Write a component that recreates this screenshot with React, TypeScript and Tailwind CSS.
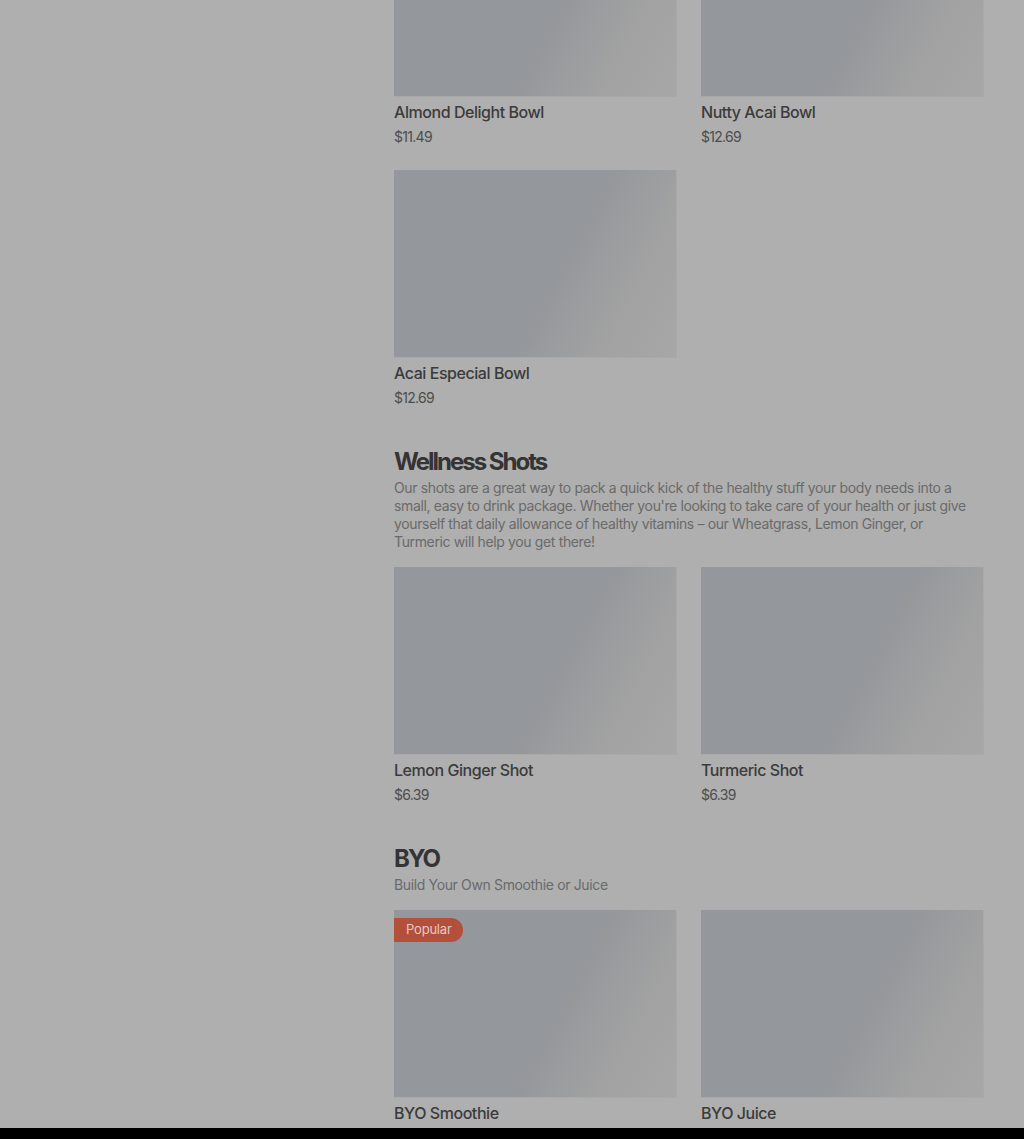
import React from "react";

type Item = { name: string; price?: string; popular?: boolean };

const font = { fontFamily: "Inter, 'Noto Sans', sans-serif" };

function Card({ item }: { item: Item }) {
  return (
    <div className="flex flex-col">
      <div className="relative h-[188px] w-full bg-[linear-gradient(118deg,#94979b_56%,#a2a2a2_80%,#a7a7a7_100%)] border-r border-b border-[#a9a9a9]">
        {item.popular && (
          <span className="absolute left-0 top-2 flex h-6 items-center rounded-r-full bg-[#b2503b] pl-3 pr-[11px] text-[13px] tracking-[-0.2px] text-[#e6c9c2]">
            Popular
          </span>
        )}
      </div>
      <div className="mt-[3px] text-[16px] leading-6 font-medium text-[#3b3b3b] tracking-[-0.45px]">{item.name}</div>
      {item.price && <div className="mt-[3px] text-[14px] leading-5 text-[#4d4d4d] tracking-[-0.7px]">{item.price}</div>}
    </div>
  );
}

function Grid({ items }: { items: Item[] }) {
  return (
    <div className="grid grid-cols-2 gap-x-6 gap-y-[23px]">
      {items.map((it) => (
        <Card key={it.name} item={it} />
      ))}
    </div>
  );
}

function Section({ title, desc, items }: { title: string; desc: string; items: Item[] }) {
  return (
    <section className="pt-[38px]">
      <h2 className="text-[24px] leading-8 font-bold tracking-[-2px] text-[#343434]">{title}</h2>
      <p className="mt-px max-w-[575px] text-[14px] leading-[18px] text-[#6a6a6a] tracking-[-0.36px]">{desc}</p>
      <div className="mt-4">
        <Grid items={items} />
      </div>
    </section>
  );
}

export default function App() {
  return (
    <div className="flex h-[1139px] w-full flex-col overflow-hidden bg-[#afafaf]" style={font}>
      <div className="h-[1128px] overflow-hidden">
        <main className="ml-[394px] mt-[-91px] w-[590px]">
          <Grid
            items={[
              { name: "Almond Delight Bowl", price: "$11.49" },
              { name: "Nutty Acai Bowl", price: "$12.69" },
              { name: "Acai Especial Bowl", price: "$12.69" },
            ]}
          />
          <Section
            title="Wellness Shots"
            desc="Our shots are a great way to pack a quick kick of the healthy stuff your body needs into a small, easy to drink package. Whether you're looking to take care of your health or just give yourself that daily allowance of healthy vitamins – our Wheatgrass, Lemon Ginger, or Turmeric will help you get there!"
            items={[
              { name: "Lemon Ginger Shot", price: "$6.39" },
              { name: "Turmeric Shot", price: "$6.39" },
            ]}
          />
          <Section
            title="BYO"
            desc="Build Your Own Smoothie or Juice"
            items={[
              { name: "BYO Smoothie", popular: true },
              { name: "BYO Juice" },
            ]}
          />
        </main>
      </div>
      <div className="h-[11px] bg-black" />
    </div>
  );
}
